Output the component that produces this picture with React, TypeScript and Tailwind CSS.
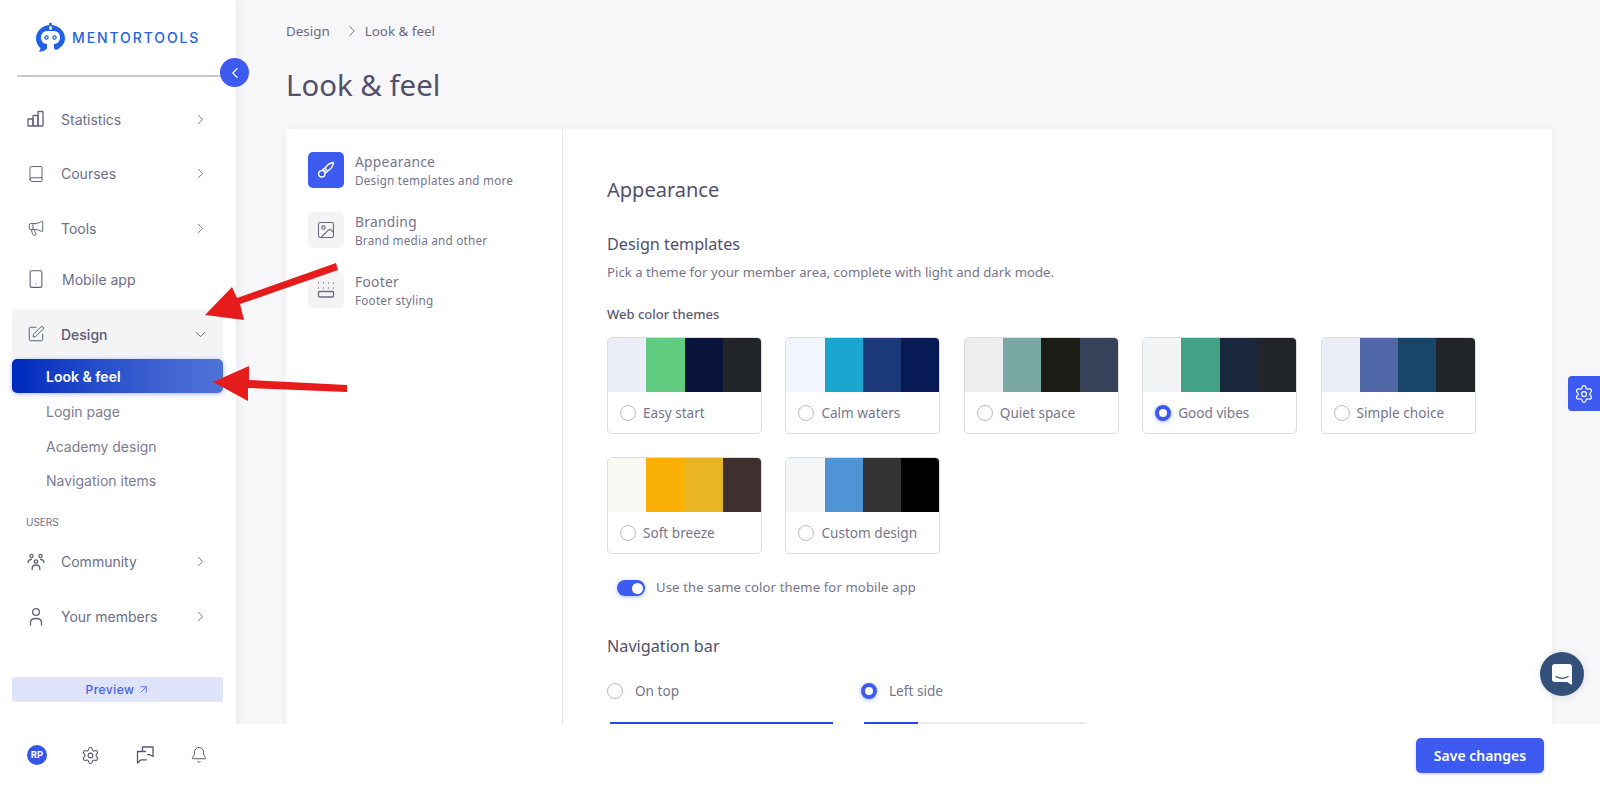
import React from "react";
import { ChevronRight, ChevronLeft, ChevronDown, Book, Megaphone, Smartphone, SquarePen, Settings, Bell, ArrowUpRight, Image } from "lucide-react";

const inter = "font-['Inter',sans-serif]";

function Bars() {
  return (
    <svg width="18" height="18" viewBox="0 0 18 18" fill="none" stroke="currentColor" strokeWidth="1.3">
      <rect x="1" y="9" width="5" height="7" rx="0.5" />
      <rect x="6" y="5.5" width="5" height="10.5" rx="0.5" />
      <rect x="11" y="1.5" width="5" height="14.5" rx="0.5" />
    </svg>
  );
}
function Community() {
  return (
    <svg width="18" height="18" viewBox="0 0 18 18" fill="none" stroke="currentColor" strokeWidth="1.3" strokeLinecap="round">
      <circle cx="4.5" cy="3" r="1.6" />
      <circle cx="13.5" cy="3" r="1.6" />
      <circle cx="9" cy="8.5" r="1.7" />
      <path d="M1 9.5c0-2 1.5-3 3.5-3M17 9.5c0-2-1.5-3-3.5-3M5.2 16.5v-1c0-2 1.6-3.5 3.8-3.5s3.8 1.5 3.8 3.5v1" />
    </svg>
  );
}
function Person() {
  return (
    <svg width="18" height="20" viewBox="0 0 18 20" fill="none" stroke="currentColor" strokeWidth="1.3" strokeLinecap="round">
      <circle cx="9" cy="5" r="3.4" />
      <path d="M3.5 18v-2.5c0-2.5 2-4 5.5-4s5.5 1.5 5.5 4V18" />
    </svg>
  );
}
function FooterIcon() {
  return (
    <svg width="18" height="18" viewBox="0 0 18 18" fill="none" stroke="currentColor" strokeWidth="1.3">
      <path d="M1.5 2v.1M6.5 2v.1M11.5 2v.1M16.5 2v.1M1.5 7v.1M6.5 7v.1M11.5 7v.1M16.5 7v.1" strokeLinecap="round" />
      <rect x="1.5" y="10.5" width="15" height="5.5" rx="1" />
    </svg>
  );
}
function BrushIcon() {
  return (
    <svg width="20" height="20" viewBox="0 0 20 20" fill="none" stroke="currentColor" strokeWidth="1.4" strokeLinejoin="round">
      <path d="M17.5 2.5c-4 .7-7 3-8.500 5.800l2.600 2.600c3-1.500 5.400-4.400 5.900-8.400z" />
      <path d="M9 8.300c-1 .2-1.800.8-2.200 1.500 1.400.4 2.600 1.500 3 3 .7-.5 1.500-1.200 1.800-1.900" />
      <circle cx="5.8" cy="13.8" r="3.2" />
    </svg>
  );
}
function Chat() {
  return (
    <svg width="18" height="18" viewBox="0 0 18 18" fill="none" stroke="currentColor" strokeWidth="1.3" strokeLinejoin="round" strokeLinecap="round">
      <path d="M6.5 4.500V1h10.500v9.500l-3-1.800h-2.500" />
      <path d="M9.5 5.500H1.500v11.500l3.500-3.200h5.500" />
    </svg>
  );
}
function Logo() {
  return (
    <svg width="29" height="29" viewBox="0 0 29 29" className="shrink-0">
      <path d="M14.5 2C6.500 2 0 8 0 15.500c0 4 1.800 7.500 4.500 9.800L3 29c3.800-.4 7-2 8-3.500V21h7v4.500l2 1.500c5-2 9-6.500 9-11.500C29 8 22.500 2 14.500 2z" fill="#1f62e8" />
      <rect x="13.2" y="0" width="2.6" height="5" fill="#1f62e8" />
      <rect x="5" y="8" width="19" height="13" rx="6" fill="#fff" />
      <rect x="13.3" y="3.3" width="2.4" height="3.4" fill="#fff" />
      <circle cx="10.5" cy="14.5" r="2.2" fill="#1f62e8" />
      <circle cx="18.5" cy="14.5" r="2.2" fill="#1f62e8" />
      <circle cx="10.5" cy="14.5" r="1" fill="#fff" />
      <circle cx="18.5" cy="14.5" r="1" fill="#fff" />
    </svg>
  );
}

function NavItem({ icon, label, h, chevron = true, textClass = "" }: { icon: React.ReactNode; label: string; h: string; chevron?: boolean; textClass?: string }) {
  return (
    <div className={`flex items-center pr-[14px] text-[#6e6e87] ${h}`}>
      <span className="flex w-[48px] justify-center pr-[1px] text-[#5f5f7a]">{icon}</span>
      <span className={`flex-1 pl-[1px] text-[14px] ${textClass}`}>{label}</span>
      {chevron && <ChevronRight size={17} strokeWidth={1.3} />}
    </div>
  );
}

function Sidebar() {
  return (
    <aside className={`relative z-10 flex h-full w-[236px] shrink-0 flex-col bg-white pl-[12px] pr-[13px] shadow-[2px_0_6px_rgba(60,60,100,0.08)] ${inter}`}>
      <div className="flex h-[75px] items-center gap-[7px] pl-[24px]">
        <Logo />
        <span className="text-[14px] font-medium tracking-[0.135em] text-[#2563e0]">MENTORTOOLS</span>
      </div>
      <div className="relative ml-[5px] h-[2px] bg-[#c9c9d1]">
        <span className="absolute -right-[26px] -top-[17px] flex h-[29px] w-[29px] items-center justify-center rounded-full bg-[#3d5af1] text-white">
          <ChevronLeft size={18} strokeWidth={1.5} />
        </span>
      </div>
      <div className="h-[15px]" />
      <NavItem h="h-[54px]" icon={<Bars />} label="Statistics" />
      <NavItem h="h-[55px]" icon={<Book size={18} strokeWidth={1.3} />} label="Courses" />
      <NavItem h="h-[54px]" icon={<Megaphone size={18} strokeWidth={1.3} />} label="Tools" />
      <NavItem h="h-[48px]" icon={<Smartphone size={20} strokeWidth={1.3} />} label="Mobile app" chevron={false} textClass="pl-[2px]" />
      <div className="h-[6px]" />
      <div className="flex h-[50px] items-center rounded-t-[6px] bg-[#f4f4f5] pr-[14px] text-[#5b5b75]">
        <span className="flex w-[48px] justify-center pr-[1px]"><SquarePen size={18} strokeWidth={1.3} /></span>
        <span className="flex-1 pl-[1px] text-[14px] font-medium">Design</span>
        <ChevronDown size={17} strokeWidth={1.3} />
      </div>
      <div className="flex h-[34px] items-center rounded-[5px] bg-gradient-to-r from-[#0028bd] via-[#3f62d2] via-70% to-[#4f72d8] pl-[34px] text-[14px] font-semibold text-white shadow-[0_1px_5px_rgba(61,90,241,0.45)]">Look &amp; feel</div>
      <div className="flex h-[36px] items-center pl-[34px] text-[14px] text-[#7b7b92]">Login page</div>
      <div className="flex h-[34px] items-center pl-[34px] text-[14px] text-[#7b7b92]">Academy design</div>
      <div className="flex h-[35px] items-center pl-[34px] text-[14px] text-[#7b7b92]">Navigation items</div>
      <div className="flex h-[31px] items-end pl-[14px] text-[10px] leading-[14px] text-[#6e6e87]">USERS</div>
      <div className="h-[5px]" />
      <NavItem h="h-[55px]" icon={<Community />} label="Community" />
      <NavItem h="h-[55px]" icon={<Person />} label="Your members" />
      <div className="h-[33px]" />
      <div className="flex h-[25px] items-center justify-center gap-[2px] rounded-[3px] bg-[#dfe4fb] text-[12px] font-medium tracking-[0.04em] text-[#4460ee]">
        Preview <ArrowUpRight size={13} strokeWidth={1.5} />
      </div>
      <div className="mt-[43px] flex items-center pl-[15px] text-[#55556e]">
        <span className="flex h-[20px] w-[20px] items-center justify-center rounded-full bg-[#3355e8] text-[9.5px] font-bold text-white">RP</span>
        <span className="ml-[34px]"><Settings size={19} strokeWidth={1.3} /></span>
        <span className="ml-[36px]"><Chat /></span>
        <span className="ml-[36px]"><Bell size={18} strokeWidth={1.3} /></span>
      </div>
    </aside>
  );
}

function Radio({ on = false }: { on?: boolean }) {
  return on ? (
    <span className="box-border block h-[16px] w-[16px] shrink-0 rounded-full border-[4.5px] border-[#3d5af1] bg-white shadow-[0_1px_4px_rgba(61,90,241,0.45)]" />
  ) : (
    <span className="box-border block h-[16px] w-[16px] shrink-0 rounded-full border border-[#b9b9c6] bg-white" />
  );
}

const themes: { name: string; c: string[]; on?: boolean }[] = [
  { name: "Easy start", c: ["#ebeef8", "#61cb80", "#09143c", "#212529"] },
  { name: "Calm waters", c: ["#f1f6fe", "#19a7cf", "#1b3879", "#071a55"] },
  { name: "Quiet space", c: ["#ededed", "#79a8a5", "#1b1c15", "#354259"] },
  { name: "Good vibes", c: ["#f3f4f6", "#43a286", "#19283d", "#212529"], on: true },
  { name: "Simple choice", c: ["#eaedf6", "#5067a8", "#18466b", "#212529"] },
  { name: "Soft breeze", c: ["#f9faf4", "#fab007", "#e8b525", "#3e302f"] },
  { name: "Custom design", c: ["#f4f5f7", "#4f95d6", "#333333", "#000000"] },
];

function ThemeCard({ t }: { t: (typeof themes)[number] }) {
  return (
    <div className="h-[97px] w-[155px] overflow-hidden rounded-[5px] border border-[#dcdce2] bg-white">
      <div className="flex h-[54px]">
        {t.c.map((c, i) => (
          <span key={i} className="flex-1" style={{ backgroundColor: c }} />
        ))}
      </div>
      <div className="flex h-[41px] items-center gap-[7px] pl-[12px] pt-[1px] text-[13.6px] text-[#77758c]">
        <Radio on={t.on} />
        {t.name}
      </div>
    </div>
  );
}

function SubNav({ icon, title, sub, active = false }: { icon: React.ReactNode; title: string; sub: string; active?: boolean }) {
  return (
    <div className="flex h-[36px] items-center gap-[11px]">
      <span className={`flex h-[36px] w-[36px] items-center justify-center rounded-[5px] ${active ? "bg-[#3d5af1] text-white" : "bg-[#f4f4f5] text-[#6a6a80]"}`}>{icon}</span>
      <span className="flex flex-col">
        <span className="pb-[1px] text-[13.8px] leading-[19px] tracking-[0.02em] text-[#76748a]">{title}</span>
        <span className="text-[11.7px] leading-[17px] tracking-[0.02em] text-[#76748a]">{sub}</span>
      </span>
    </div>
  );
}

function Content() {
  return (
    <div className="flex h-full min-w-0 flex-1 flex-col font-['Noto_Sans',sans-serif]">
      <div className="min-h-0 flex-1 overflow-hidden bg-[#f7f7fa] pl-[50px] pr-[48px] pt-[21px]">
        <div className="flex h-[20px] items-center text-[13.4px] leading-[20px] text-[#6b6a80]">
          <span>Design</span>
          <span className="ml-[13px] mr-[4px]"><ChevronRight size={18} strokeWidth={1.2} /></span>
          <span>Look &amp; feel</span>
        </div>
        <h1 className="mt-[25px] text-[29.4px] leading-[38px] text-[#51506a]">Look &amp; feel</h1>
        <div className="mt-[25px] flex h-[640px] rounded-[4px] bg-white shadow-[0_0_6px_rgba(60,60,100,0.07)]">
          <div className="flex w-[277px] shrink-0 flex-col gap-[24px] border-r border-[#e6e6ea] pl-[22px] pt-[23px]">
            <SubNav active icon={<BrushIcon />} title="Appearance" sub="Design templates and more" />
            <SubNav icon={<Image size={20} strokeWidth={1.3} />} title="Branding" sub="Brand media and other" />
            <SubNav icon={<FooterIcon />} title="Footer" sub="Footer styling" />
          </div>
          <div className="min-w-0 flex-1 pl-[44px] pt-[46px]">
            <h2 className="text-[20px] leading-[30px] text-[#51506a]">Appearance</h2>
            <h3 className="mt-[28px] text-[16.2px] leading-[22px] text-[#51506a]">Design templates</h3>
            <p className="mt-[7px] text-[13.2px] leading-[20px] text-[#76748a]">Pick a theme for your member area, complete with light and dark mode.</p>
            <p className="mt-[22px] text-[13px] font-medium leading-[20px] text-[#5b5a72]">Web color themes</p>
            <div className="mt-[13px] flex w-[900px] flex-wrap gap-x-[23.4px] gap-y-[23px]">
              {themes.map((t) => (
                <ThemeCard key={t.name} t={t} />
              ))}
            </div>
            <div className="mt-[25px] flex h-[18px] items-center gap-[11px] pl-[10px]">
              <span className="flex h-[16px] w-[28px] items-center justify-end rounded-full bg-[#3d5af1] pr-[2px] shadow-[0_1px_4px_rgba(61,90,241,0.4)]">
                <span className="h-[11px] w-[11px] rounded-full bg-white" />
              </span>
              <span className="text-[13.1px] tracking-[0.01em] text-[#76748a]">Use the same color theme for mobile app</span>
            </div>
            <h3 className="mt-[38px] text-[16.2px] leading-[22px] text-[#51506a]">Navigation bar</h3>
            <div className="mt-[24px] flex">
              <div className="w-[254px]">
                <div className="flex h-[20px] items-center gap-[12px] text-[13.6px] text-[#76748a]"><Radio /> On top</div>
                <div className="ml-[3px] mt-[21px] h-[2px] w-[223px] bg-[#2647ee]" />
              </div>
              <div>
                <div className="flex h-[20px] items-center gap-[12px] text-[13.6px] text-[#76748a]"><Radio on /> Left side</div>
                <div className="ml-[3px] mt-[21px] flex h-[2px] w-[222px] bg-[#ececef]"><span className="w-[54px] bg-[#2647ee]" /></div>
              </div>
            </div>
          </div>
        </div>
      </div>
      <div className="relative z-10 flex h-[62px] shrink-0 items-center justify-end bg-white pr-[56px] pt-[1px]">
        <button className="flex h-[35px] w-[128px] items-center justify-center rounded-[5px] bg-[#3d5af1] text-[14px] font-semibold text-white shadow-[0_1px_3px_rgba(61,90,241,0.35)]">Save changes</button>
      </div>
    </div>
  );
}

export default function App() {
  return (
    <div className="relative flex h-screen w-full overflow-hidden bg-white">
      <Sidebar />
      <Content />
      <div className="absolute right-0 top-[376px] z-20 flex h-[35px] w-[32px] items-center justify-center rounded-l-[4px] bg-[#3d5af1] text-white">
        <Settings size={20} strokeWidth={1.5} />
      </div>
      <div className="absolute left-[1540px] top-[652px] z-20 flex h-[44px] w-[44px] items-center justify-center rounded-full bg-[#34507a] shadow-[0_1px_8px_rgba(0,0,0,0.12)]">
        <svg width="20" height="21" viewBox="0 0 20 21">
          <path d="M3 0h14a3 3 0 0 1 3 3v18l-5-3H3a3 3 0 0 1-3-3V3a3 3 0 0 1 3-3z" fill="#fff" />
          <path d="M4 12.5c3.5 2.2 8.5 2.2 12 0" fill="none" stroke="#34507a" strokeWidth="1.3" strokeLinecap="round" />
        </svg>
      </div>
      <svg className="pointer-events-none absolute left-0 top-0 z-30" width="400" height="420" viewBox="0 0 400 420">
        <polygon points="205,315 232,287 237,298 336,263 338,270 240,304 244,320" fill="#e61c1c" />
        <polygon points="213,382 249,366 249,380 347,385 347,392 248,388 248,401" fill="#e61c1c" />
      </svg>
    </div>
  );
}
